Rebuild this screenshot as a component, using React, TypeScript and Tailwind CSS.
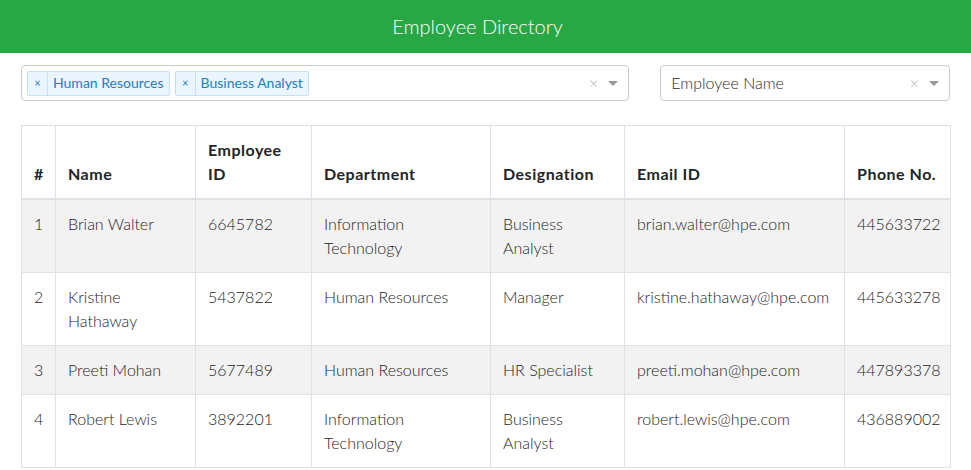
const employees = [
  { id: 1, name: "Brian Walter", empId: "6645782", dept: "Information Technology", desig: "Business Analyst", email: "brian.walter@hpe.com", phone: "445633722" },
  { id: 2, name: "Kristine Hathaway", empId: "5437822", dept: "Human Resources", desig: "Manager", email: "kristine.hathaway@hpe.com", phone: "445633278" },
  { id: 3, name: "Preeti Mohan", empId: "5677489", dept: "Human Resources", desig: "HR Specialist", email: "preeti.mohan@hpe.com", phone: "447893378" },
  { id: 4, name: "Robert Lewis", empId: "3892201", dept: "Information Technology", desig: "Business Analyst", email: "robert.lewis@hpe.com", phone: "436889002" },
];

const Chip = ({ label }: { label: string }) => (
  <div className="flex items-center h-[25px] rounded-[2px] border border-[#c2e0ff] bg-[#ebf5ff] text-[#1b7fc4] text-[14px]">
    <span className="w-[20px] h-full flex items-center justify-center border-r border-[#c2e0ff] text-[11px]">×</span>
    <span className="px-[5px]">{label}</span>
  </div>
);

const Controls = () => (
  <div className="flex items-center gap-[10px]">
    <span className="text-[#aaa] text-[16px] font-light leading-none">×</span>
    <span className="w-0 h-0 border-x-[5px] border-x-transparent border-t-[5px] border-t-[#999]" />
  </div>
);

const headCls = "border border-[#dee2e6] border-b-2 px-3 py-3 align-bottom text-left font-bold tracking-[0.5px] text-[#212529]";
const cellCls = "border border-[#dee2e6] px-3 py-3 align-top";

export default function App() {
  return (
    <div className="w-[971px] h-[470px] overflow-hidden bg-white text-[#212529] font-['Lato','Open_Sans',sans-serif] text-[16px] leading-6">
      {/* header bar */}
      <div className="h-[53px] bg-[#28a745] flex items-center justify-center pr-[16px] pb-[1px]">
        <h1 className="text-white text-[20px] font-light">Employee Directory</h1>
      </div>

      <div className="px-[21px] pt-3">
        {/* filters */}
        <div className="flex gap-[31px]">
          <div className="w-[609px] h-[36px] border border-[#ccc] rounded-[4px] flex items-center pl-[5px] pr-[10px]">
            <div className="flex gap-[5px] flex-1">
              <Chip label="Human Resources" />
              <Chip label="Business Analyst" />
            </div>
            <Controls />
          </div>
          <div className="w-[290px] h-[36px] border border-[#ccc] rounded-[4px] flex items-center pl-[10px] pr-[10px]">
            <span className="flex-1 text-[16px] font-light text-[#2a2a2a]">Employee Name</span>
            <Controls />
          </div>
        </div>

        {/* table */}
        <table className="mt-6 w-[929px] table-fixed border-collapse font-light text-[#1f2326]">
          <colgroup>
            <col className="w-[34px]" />
            <col className="w-[140px]" />
            <col className="w-[116px]" />
            <col className="w-[179px]" />
            <col className="w-[134px]" />
            <col className="w-[220px]" />
            <col className="w-[106px]" />
          </colgroup>
          <thead>
            <tr>
              <th className={headCls}>#</th>
              <th className={headCls}>Name</th>
              <th className={headCls}>Employee ID</th>
              <th className={headCls}>Department</th>
              <th className={headCls}>Designation</th>
              <th className={headCls}>Email ID</th>
              <th className={headCls}>Phone No.</th>
            </tr>
          </thead>
          <tbody>
            {employees.map((e, i) => (
              <tr key={e.id} className={i % 2 === 0 ? "bg-[#f2f2f2]" : "bg-white"}>
                <td className={cellCls}>{e.id}</td>
                <td className={cellCls}>{e.name}</td>
                <td className={cellCls}>{e.empId}</td>
                <td className={cellCls}>{e.dept}</td>
                <td className={cellCls}>{e.desig}</td>
                <td className={cellCls}>{e.email}</td>
                <td className={cellCls}>{e.phone}</td>
              </tr>
            ))}
          </tbody>
        </table>
      </div>
    </div>
  );
}
